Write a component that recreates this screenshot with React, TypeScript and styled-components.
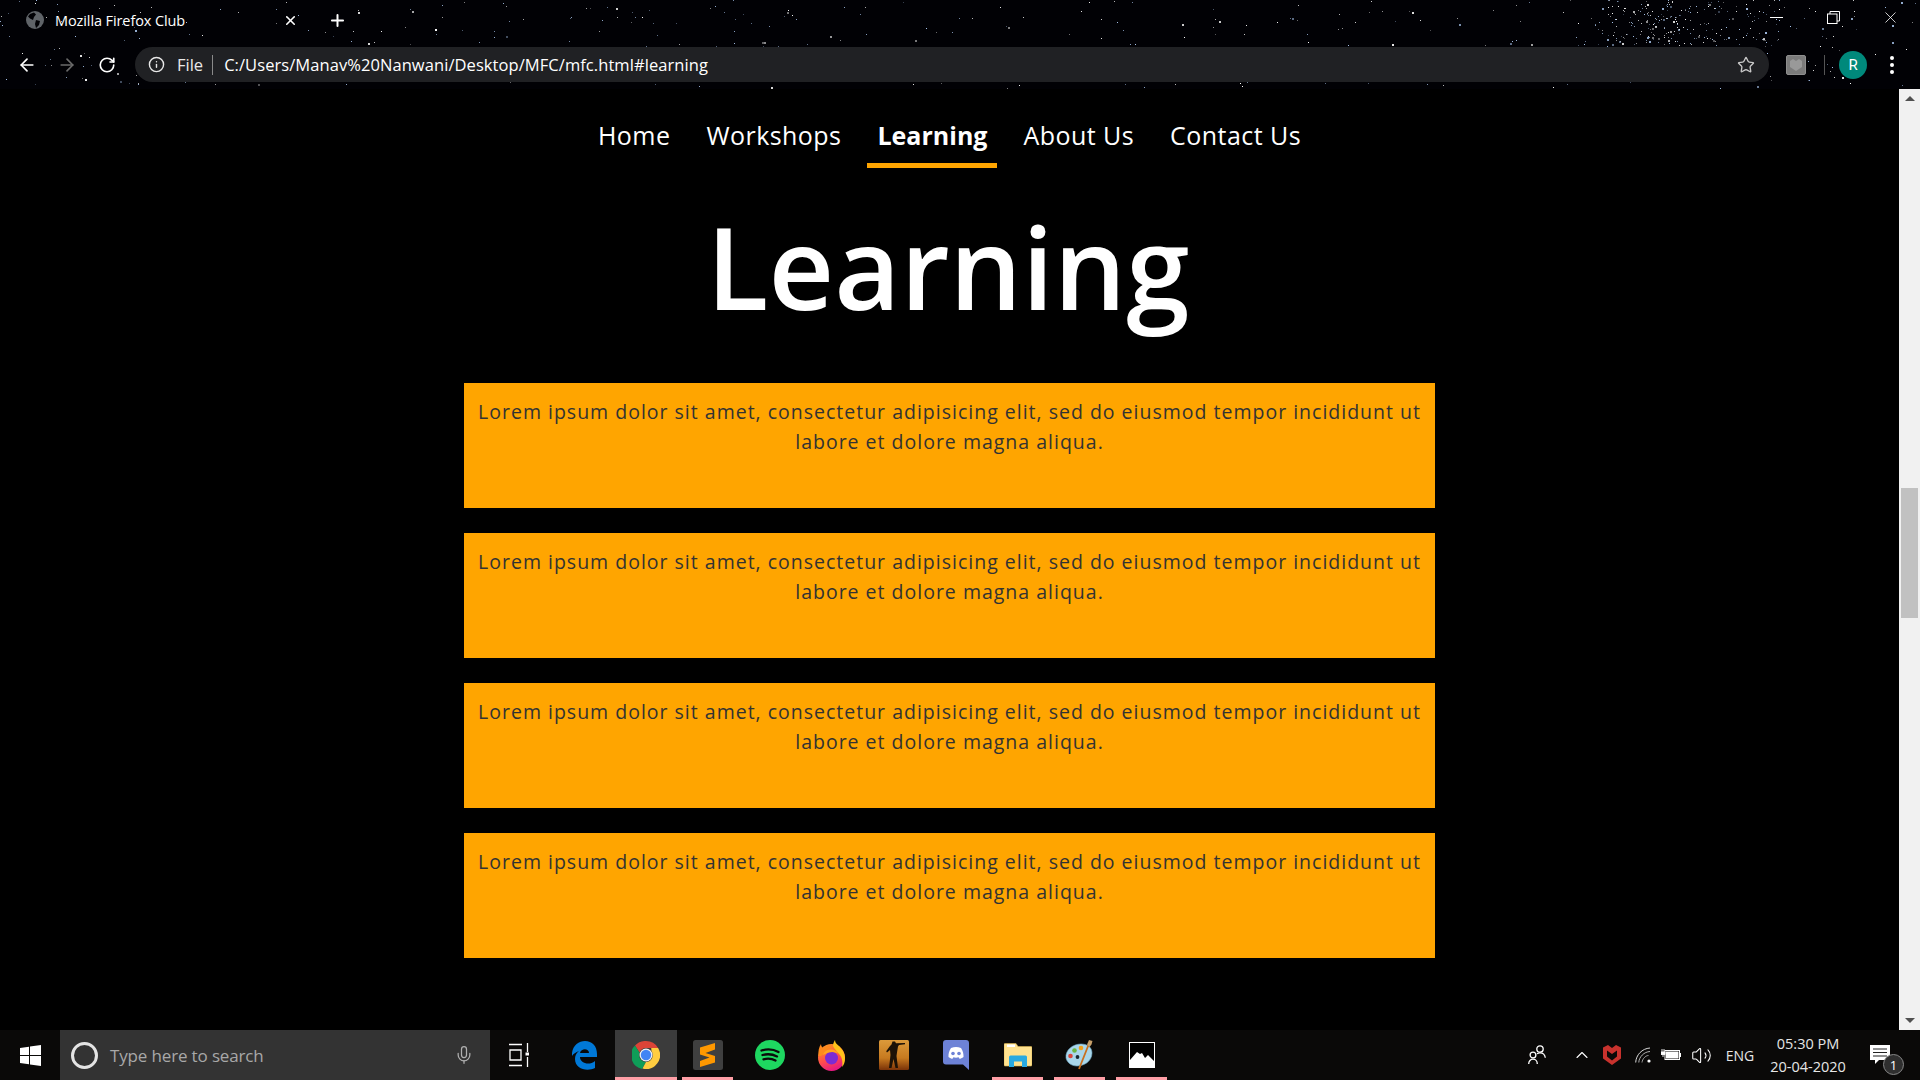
import React from 'react';
import styled, { createGlobalStyle } from 'styled-components';
import { ArrowLeft, ArrowRight, RotateCw, Info, Star, Mic, X, Plus, ChevronUp, Volume2 } from 'lucide-react';

const GlobalStyle = createGlobalStyle`
  html, body { margin: 0; padding: 0; background: #000; overflow: hidden; }
  * { box-sizing: border-box; }
  body { font-family: "Open Sans", "Noto Sans", sans-serif; }
`;

const Page = styled.div`
  width: 1920px;
  height: 1080px;
  display: flex;
  flex-direction: column;
  overflow: hidden;
  background: #000;
`;

// browser frame
const BrowserFrame = styled.header`
  position: relative;
  height: 89px;
  flex: none;
  background: #010105;
  overflow: hidden;
`;

const Stars = styled.svg`
  position: absolute;
  inset: 0;
`;

const TabRow = styled.div`
  position: relative;
  height: 47px;
  display: flex;
  align-items: flex-start;
  padding-left: 25px;
  padding-top: 10px;
  color: #fff;
`;

const GlobeIcon = styled.svg`
  flex: none;
  width: 20px;
  height: 20px;
`;

const TabTitle = styled.span`
  margin-left: 10px;
  width: 225px;
  font-size: 14.5px;
  line-height: 21px;
  white-space: nowrap;
  letter-spacing: -0.1px;
`;

const TabButton = styled.span<{ $w: number }>`
  flex: none;
  width: ${(p) => p.$w}px;
  height: 20px;
  display: flex;
  align-items: center;
  justify-content: center;
`;

const WindowControls = styled.div`
  margin-left: auto;
  display: flex;
  margin-top: -3px;
  margin-right: 1px;
`;

const WindowButton = styled.span`
  width: 57px;
  height: 20px;
  display: flex;
  align-items: center;
  justify-content: center;
`;

const MinimizeBar = styled.span`
  width: 13px;
  height: 1px;
  background: #fff;
`;

const Toolbar = styled.div`
  position: relative;
  height: 35px;
  display: flex;
  align-items: center;
  padding-left: 7px;
`;

const NavIcon = styled.span<{ $dim?: boolean }>`
  flex: none;
  width: 40px;
  height: 35px;
  display: flex;
  align-items: center;
  justify-content: center;
  color: ${(p) => (p.$dim ? '#6b6b6b' : '#fff')};
`;

const Omnibox = styled.div`
  flex: none;
  margin-left: 8px;
  width: 1634px;
  height: 35px;
  border-radius: 18px;
  background: #202124;
  display: flex;
  align-items: center;
  padding: 0 14px 0 13px;
  color: #e8e8e8;
  font-size: 16.5px;
`;

const FileLabel = styled.span`
  margin-left: 12px;
`;

const OmniDivider = styled.span`
  width: 1px;
  height: 20px;
  margin: 0 11px 0 9px;
  background: #8a8a8a;
`;

const UrlText = styled.span`
  flex: 1;
  color: #fff;
  white-space: nowrap;
  letter-spacing: 0.07px;
`;

const ExtensionBox = styled.span`
  flex: none;
  margin-left: 17px;
  width: 20px;
  height: 20px;
  border-radius: 2px;
  background: #7b7b7b;
  border: 1px solid #8e8e8e;
  display: flex;
  align-items: center;
  justify-content: center;
`;

const ToolbarDivider = styled.span`
  flex: none;
  width: 1px;
  height: 20px;
  margin-left: 18px;
  background: #555;
`;

const Avatar = styled.span`
  flex: none;
  width: 28px;
  height: 28px;
  margin-left: 14px;
  border-radius: 50%;
  background: #00897b;
  color: #fff;
  font-family: "Roboto", sans-serif;
  font-size: 15px;
  display: flex;
  align-items: center;
  justify-content: center;
`;

const MenuDots = styled.span`
  flex: none;
  margin-left: 23px;
  width: 4px;
  display: flex;
  flex-direction: column;
  gap: 3px;
  span {
    width: 4px;
    height: 4px;
    border-radius: 50%;
    background: #fff;
  }
`;

// page
const Viewport = styled.div`
  flex: 1;
  display: flex;
  min-height: 0;
`;

const Content = styled.main`
  flex: 1;
  display: flex;
  flex-direction: column;
  align-items: center;
  background: #000;
`;

const Nav = styled.nav`
  display: flex;
  gap: 16px;
  margin-top: 25px;
`;

const NavLink = styled.a<{ $active?: boolean }>`
  padding: 0 10px 6px;
  font-size: 25px;
  line-height: 43px;
  letter-spacing: ${(p) => (p.$active ? 0 : 0.45)}px;
  color: #fff;
  font-weight: ${(p) => (p.$active ? 700 : 400)};
  border-bottom: 5px solid ${(p) => (p.$active ? '#ffa500' : 'transparent')};
`;

const Title = styled.h1`
  margin: 18px 0 0;
  padding-right: 3px;
  font-size: 114px;
  line-height: 160px;
  font-weight: 600;
  color: #fff;
`;

const CardList = styled.div`
  margin-top: 37px;
  width: 971px;
  display: flex;
  flex-direction: column;
  gap: 25px;
`;

const Card = styled.p`
  margin: 0;
  height: 125px;
  padding: 14px 10px 0;
  background: #ffa500;
  color: #333;
  text-align: center;
  font-size: 19.5px;
  line-height: 30px;
  letter-spacing: 1px;
`;

const Scrollbar = styled.div`
  flex: none;
  width: 21px;
  background: #f1f1f1;
  display: flex;
  flex-direction: column;
  align-items: center;
  justify-content: space-between;
  position: relative;
`;

const ScrollArrow = styled.span<{ $down?: boolean }>`
  margin: 7px 0;
  width: 0;
  height: 0;
  border-left: 5px solid transparent;
  border-right: 5px solid transparent;
  ${(p) => (p.$down ? 'border-top: 5px solid #505050;' : 'border-bottom: 5px solid #505050;')}
`;

const ScrollThumb = styled.span`
  position: absolute;
  left: 2px;
  top: 399px;
  width: 17px;
  height: 130px;
  background: #c1c1c1;
`;

// taskbar
const Taskbar = styled.footer`
  height: 50px;
  flex: none;
  display: flex;
  align-items: stretch;
  background: #0a0908;
`;

const StartButton = styled.div`
  width: 60px;
  display: flex;
  align-items: center;
  justify-content: center;
`;

const SearchBox = styled.div`
  width: 430px;
  background: #333;
  display: flex;
  align-items: center;
  padding-left: 11px;
  color: #a8a8a8;
`;

const Cortana = styled.span`
  flex: none;
  width: 27px;
  height: 27px;
  border: 3px solid #e4e4e4;
  border-radius: 50%;
`;

const SearchText = styled.span`
  margin-left: 12px;
  flex: 1;
  font-size: 17px;
  letter-spacing: -0.15px;
`;

const MicWrap = styled.span`
  display: flex;
  margin-right: 16px;
  color: #b0b0b0;
`;

const TaskViewCell = styled.div`
  width: 58px;
  margin-right: 5px;
  display: flex;
  align-items: center;
  justify-content: center;
`;

const AppCell = styled.div<{ $active?: boolean; $open?: boolean }>`
  position: relative;
  width: 62px;
  display: flex;
  align-items: center;
  justify-content: center;
  background: ${(p) => (p.$active ? '#3b3b3b' : 'transparent')};
  ${(p) =>
    (p.$active || p.$open) &&
    `&::after {
      content: '';
      position: absolute;
      bottom: 0;
      height: 3px;
      background: #ff9fa6;
      left: ${p.$active ? 0 : 5}px;
      right: ${p.$active ? 0 : 6}px;
    }`}
`;

const Tray = styled.div`
  margin-left: auto;
  display: flex;
  align-items: center;
  padding-right: 15px;
  color: #fff;
`;

const TrayItem = styled.span<{ $w: number }>`
  flex: none;
  width: ${(p) => p.$w}px;
  height: 50px;
  display: flex;
  align-items: center;
  justify-content: center;
  position: relative;
`;

const TrayText = styled.span`
  font-size: 14px;
  color: #e6e6e6;
`;

const Clock = styled.span`
  display: flex;
  flex-direction: column;
  align-items: center;
  font-size: 14.5px;
  line-height: 23px;
  color: #e6e6e6;
`;

const NotifyBadge = styled.span`
  position: absolute;
  left: 28px;
  top: 24px;
  width: 21px;
  height: 21px;
  border-radius: 50%;
  border: 1px solid #888;
  background: #2f2f2f;
  color: #fff;
  font-size: 13px;
  display: flex;
  align-items: center;
  justify-content: center;
`;

// drawings
const makeStars = () => {
  let seed = 17;
  const rnd = () => {
    seed = (seed * 16807) % 2147483647;
    return seed / 2147483647;
  };
  const stars: { x: number; y: number; s: number; o: number; c: string }[] = [];
  const push = (x: number, y: number) => {
    const big = rnd() > 0.86;
    stars.push({
      x: Math.round(x),
      y: Math.round(y),
      s: big ? 2 : 1,
      o: 0.3 + rnd() * 0.7,
      c: rnd() > 0.5 ? '#ffffff' : '#a9c6ee',
    });
  };
  for (let i = 0; i < 480; i++) push(rnd() * 1920, rnd() * 88);
  for (let i = 0; i < 170; i++) push(1590 + rnd() * 190, rnd() * 46);
  for (let i = 0; i < 70; i++) push(1620 + rnd() * 90, rnd() * 46);
  return stars;
};
const starList = makeStars();

const Starfield = () => (
  <Stars width="1920" height="89">
    {starList.map((st, i) => (
      <rect key={i} x={st.x} y={st.y} width={st.s} height={st.s} fill={st.c} opacity={st.o} />
    ))}
  </Stars>
);

const Globe = () => (
  <GlobeIcon viewBox="0 0 20 20">
    <circle cx="10" cy="10" r="9" fill="#5f6368" />
    <path d="M5 4l4-1.500 2 2-2 2.500-1 3-3-1.500-2-2zM11 10l4 1-1 4-3 3-1-4z" fill="#010105" />
  </GlobeIcon>
);

const WindowsLogo = () => (
  <svg width="21" height="21" viewBox="0 0 21 21">
    <path d="M0 3l9-1.300V10H0zM10 1.500L21 0v10H10zM0 11h9v8.300L0 18zM10 11h11v10l-11-1.500z" fill="#fff" />
  </svg>
);

const TaskViewIcon = () => (
  <svg width="20" height="24" viewBox="0 0 20 24" fill="none" stroke="#fff" strokeWidth="1.300">
    <path d="M0 1.500h13M0 22.500h13M1 7h11v10H1z" />
    <path d="M18.500 0v9M18.500 14v10" />
    <rect x="16.500" y="9.500" width="3.500" height="3" fill="#fff" stroke="none" />
  </svg>
);

const EdgeIcon = () => (
  <svg width="26" height="30" viewBox="0 0 26 30">
    <path
      d="M1 13C2 5 8 1 14 1c7 0 12 5 12 13v3H9c0 6 9 9 15 4v7c-8 4-20 1-20-9 0-3 1-6 4-8-3 1-6 3-7 5zm8 0h9c0-5-8-5-9 0z"
      fill="#0078d7"
    />
  </svg>
);

const ChromeIcon = () => (
  <svg width="28" height="28" viewBox="0 0 28 28">
    <path d="M14 0a14 14 0 0 1 12.100 7H14a7 7 0 0 0-6.500 4.500L3 4.500A14 14 0 0 1 14 0z" fill="#db4437" />
    <path d="M3 4.500l4.500 7a7 7 0 0 0 6.500 9.500L10 28A14 14 0 0 1 3 4.500z" fill="#0f9d58" />
    <path d="M26.100 7A14 14 0 0 1 10.500 27.600L14 21a7 7 0 0 0 5.500-11l-.3-3z" fill="#ffcd40" />
    <circle cx="14" cy="14" r="6.500" fill="#f1f1f1" />
    <circle cx="14" cy="14" r="5.200" fill="#4285f4" />
  </svg>
);

const SublimeIcon = () => (
  <svg width="30" height="30" viewBox="0 0 30 30">
    <rect width="30" height="30" rx="2.500" fill="#3f3f3f" />
    <path d="M22 5v6.500L12.500 15 22 18v6.500L7 29v-.1V23l9.500-3.500L7 16.500V9.500z" transform="translate(0 -2)" fill="#ff9800" />
  </svg>
);

const SpotifyIcon = () => (
  <svg width="30" height="30" viewBox="0 0 30 30">
    <circle cx="15" cy="15" r="15" fill="#1ed760" />
    <path
      d="M6.500 10.500c6-1.700 12-1.200 17 1.500M7.500 15c5-1.300 10-.9 14.500 1.400M8.500 19.300c4.200-1 8.400-.7 12 1.200"
      fill="none"
      stroke="#0b0b0b"
      strokeWidth="2.300"
      strokeLinecap="round"
    />
  </svg>
);

const FirefoxIcon = () => (
  <svg width="30" height="32" viewBox="0 0 30 32">
    <defs>
      <linearGradient id="ffBody" x1="0.2" y1="0" x2="0.6" y2="1">
        <stop offset="0" stopColor="#ff9a1f" />
        <stop offset="0.55" stopColor="#ff4f4a" />
        <stop offset="1" stopColor="#e31587" />
      </linearGradient>
    </defs>
    <circle cx="14.500" cy="18.500" r="13.500" fill="url(#ffBody)" />
    <path d="M1.500 17C1 12 2 8 4 5c0 2 1 3.500 2.500 4 3-2.500 6-2 8.500-.5-3 .5-5.500 2-5 3.500l-6 5z" fill="#ff8a1c" />
    <circle cx="14.500" cy="19" r="6.500" fill="#7b2bd4" />
    <path d="M6 16c1-4 5-6 9-5.500 3 .5 5 2 6 4-3-1.500-6-2-9-1-2 .7-4.500 1.500-6 2.500z" fill="#ffa51f" />
    <path d="M18 1c0 3 2 4 4 6 3 3 6 7 6 12 0 4-1 7-3 9 1-5 0-10-3-13-2-3-5-5-6-8 0-3 1-4 2-6z" fill="#ffc21a" />
  </svg>
);

const CounterStrikeIcon = () => (
  <svg width="30" height="30" viewBox="0 0 30 30">
    <defs>
      <linearGradient id="csBg" x1="0" y1="0" x2="0" y2="1">
        <stop offset="0" stopColor="#dc9a3a" />
        <stop offset="0.6" stopColor="#c77a1f" />
        <stop offset="1" stopColor="#7a3208" />
      </linearGradient>
    </defs>
    <rect width="30" height="30" rx="1.500" fill="url(#csBg)" />
    <path
      d="M13.500 1.500h2.500l1 1.800 9-.3v1.300l-6 .7-1 1.500-1 6-.5 3.500 1.500 12h-2.500l-2-9-2 9H10l1.500-13-.5-5-3 2.500-.8-1.200L11 6l1.500-1.500z"
      fill="#1c1207"
    />
  </svg>
);

const DiscordIcon = () => (
  <svg width="26" height="30" viewBox="0 0 26 30">
    <path d="M3 0h20a3 3 0 0 1 3 3v27l-6-5.500H3a3 3 0 0 1-3-3V3a3 3 0 0 1 3-3z" fill="#6d82d6" />
    <path
      d="M8 8c3.500-1.300 6.500-1.300 10 0 2 3 2.700 6 2.500 9-1.500 1.200-3 1.700-4 1.800l-.9-1.500c-1.700.5-3.500.5-5.200 0l-.9 1.500c-1-.1-2.500-.6-4-1.800-.2-3 .5-6 2.500-9z"
      fill="#fff"
    />
    <circle cx="10" cy="13.500" r="1.800" fill="#6d82d6" />
    <circle cx="16" cy="13.500" r="1.800" fill="#6d82d6" />
  </svg>
);

const ExplorerIcon = () => (
  <svg width="28" height="24" viewBox="0 0 28 24">
    <path d="M0 1.500A1 1 0 0 1 1 .5h11l2 3h13a1 1 0 0 1 1 1V22a1 1 0 0 1-1 1H1a1 1 0 0 1-1-1z" fill="#ffe28f" stroke="#d9b24f" strokeWidth=".6" />
    <rect x="3" y="1.500" width="8" height="2.500" fill="#fff" />
    <path d="M5 24V14a1.500 1.500 0 0 1 1.500-1.500h15A1.500 1.500 0 0 1 23 14v10h-5v-5.500h-8V24z" fill="#29aae1" />
  </svg>
);

const PaintIcon = () => (
  <svg width="30" height="30" viewBox="0 0 30 30">
    <path d="M1 18C0 10 8 4 16 4c6 0 11 3 11 9 0 9-9 13-15 13-5 0-10-3-11-8z" fill="#a9d6ea" stroke="#6da8c4" strokeWidth=".6" />
    <circle cx="5.500" cy="16" r="2.300" fill="#d9453a" />
    <circle cx="9.500" cy="10.500" r="2.300" fill="#6cb543" />
    <circle cx="16" cy="8" r="2.300" fill="#f0a11f" />
    <circle cx="12.500" cy="17" r="1.900" fill="#1b2a33" />
    <path d="M23.500 5L14 29" stroke="#c9701f" strokeWidth="1.800" />
    <path d="M22 4.500L24 0l3.500 1-1 3.500-2 2.500z" fill="#c8a06a" />
  </svg>
);

const PhotosIcon = () => (
  <svg width="26" height="26" viewBox="0 0 26 26">
    <rect x="0.500" y="0.500" width="25" height="25" fill="#000" stroke="#fff" />
    <path d="M1 26V18l7-8 3 2 2-1 3 5 3-3 6 6v7z" fill="#fff" />
  </svg>
);

const PeopleIcon = () => (
  <svg width="18" height="20" viewBox="0 0 18 20" fill="none" stroke="#fff" strokeWidth="1.300">
    <circle cx="5" cy="10" r="2.900" />
    <path d="M.7 19c0-3 2-4.800 4.300-4.800S9.300 16 9.300 19" />
    <circle cx="12" cy="4" r="3.200" />
    <path d="M9 8.800c1-.7 2-1 3-1 3 0 5 2.300 5.300 5" />
  </svg>
);

const McAfeeIcon = () => (
  <svg width="18" height="20" viewBox="0 0 18 20">
    <path d="M0 2.500L5 0l4 3 4-3 5 2.500v11L9 20 0 13.500zM4 5.500v6l5 4 5-4v-6l-5 3.500z" fill="#c8322d" fillRule="evenodd" />
  </svg>
);

const WifiIcon = () => (
  <svg width="16" height="16" viewBox="0 0 16 16" fill="none" stroke="#d8d8d8" strokeWidth="1">
    <path d="M.7 15.500C1 8 7 1.500 15 1" />
    <path d="M3.800 15.500C4 10 9 4.800 15 4.500" opacity=".8" />
    <path d="M7 15.500C7.300 12 10.500 8.500 13.500 8.500" opacity=".7" />
    <circle cx="14" cy="14" r="1.600" fill="#fff" stroke="none" />
  </svg>
);

const BatteryIcon = () => (
  <svg width="20" height="14" viewBox="0 0 20 14">
    <path d="M1 1v3M3 1v3M0 4h4v2.500H0zM2 6.500V9" stroke="#fff" strokeWidth=".9" fill="#fff" />
    <rect x="4" y="2.500" width="14.500" height="9" fill="none" stroke="#fff" strokeWidth="1" />
    <rect x="5" y="3.500" width="12.500" height="7" fill="#fff" />
    <rect x="19" y="5" width="1" height="4" fill="#fff" />
  </svg>
);

export default function App() {
  const cards = [1, 2, 3, 4];
  return (
    <Page>
      <GlobalStyle />
      <BrowserFrame>
        <Starfield />
        <TabRow>
          <Globe />
          <TabTitle>Mozilla Firefox Club</TabTitle>
          <TabButton $w={20}><X size={15} strokeWidth={2.500} color="#fff" /></TabButton>
          <TabButton $w={74}><Plus size={19} strokeWidth={2.500} color="#fff" /></TabButton>
          <WindowControls>
            <WindowButton><MinimizeBar /></WindowButton>
            <WindowButton>
              <svg width="13" height="13" viewBox="0 0 13 13" fill="none" stroke="#fff">
                <rect x="0.500" y="3" width="9.500" height="9.500" />
                <path d="M3 3V.500h9.500V10H10" />
              </svg>
            </WindowButton>
            <WindowButton><X size={19} strokeWidth={1} color="#fff" /></WindowButton>
          </WindowControls>
        </TabRow>
        <Toolbar>
          <NavIcon><ArrowLeft size={20} strokeWidth={2} /></NavIcon>
          <NavIcon $dim><ArrowRight size={20} strokeWidth={2} /></NavIcon>
          <NavIcon><RotateCw size={18} strokeWidth={2.200} /></NavIcon>
          <Omnibox>
            <Info size={17} strokeWidth={2} color="#e8e8e8" />
            <FileLabel>File</FileLabel>
            <OmniDivider />
            <UrlText>C:/Users/Manav%20Nanwani/Desktop/MFC/mfc.html#learning</UrlText>
            <Star size={18} strokeWidth={1.800} color="#c8c8c8" />
          </Omnibox>
          <ExtensionBox>
            <svg width="12" height="12" viewBox="0 0 12 12">
              <path d="M0 2l3-2 3 2 3-2 3 2v6l-6 4-6-4z" fill="#999" />
            </svg>
          </ExtensionBox>
          <ToolbarDivider />
          <Avatar>R</Avatar>
          <MenuDots><span /><span /><span /></MenuDots>
        </Toolbar>
      </BrowserFrame>

      <Viewport>
        <Content>
          <Nav>
            <NavLink>Home</NavLink>
            <NavLink>Workshops</NavLink>
            <NavLink $active>Learning</NavLink>
            <NavLink>About Us</NavLink>
            <NavLink>Contact Us</NavLink>
          </Nav>
          <Title>Learning</Title>
          <CardList>
            {cards.map((c) => (
              <Card key={c}>
                Lorem ipsum dolor sit amet, consectetur adipisicing elit, sed do eiusmod tempor incididunt ut labore et dolore magna aliqua.
              </Card>
            ))}
          </CardList>
        </Content>
        <Scrollbar>
          <ScrollArrow />
          <ScrollThumb />
          <ScrollArrow $down />
        </Scrollbar>
      </Viewport>

      <Taskbar>
        <StartButton><WindowsLogo /></StartButton>
        <SearchBox>
          <Cortana />
          <SearchText>Type here to search</SearchText>
          <MicWrap><Mic size={20} strokeWidth={1.500} /></MicWrap>
        </SearchBox>
        <TaskViewCell><TaskViewIcon /></TaskViewCell>
        <AppCell><EdgeIcon /></AppCell>
        <AppCell $active><ChromeIcon /></AppCell>
        <AppCell $open><SublimeIcon /></AppCell>
        <AppCell><SpotifyIcon /></AppCell>
        <AppCell><FirefoxIcon /></AppCell>
        <AppCell><CounterStrikeIcon /></AppCell>
        <AppCell><DiscordIcon /></AppCell>
        <AppCell $open><ExplorerIcon /></AppCell>
        <AppCell $open><PaintIcon /></AppCell>
        <AppCell $open><PhotosIcon /></AppCell>
        <Tray>
          <TrayItem $w={60}><PeopleIcon /></TrayItem>
          <TrayItem $w={30}><ChevronUp size={20} strokeWidth={1.300} color="#fff" /></TrayItem>
          <TrayItem $w={30}><McAfeeIcon /></TrayItem>
          <TrayItem $w={32}><WifiIcon /></TrayItem>
          <TrayItem $w={24}><BatteryIcon /></TrayItem>
          <TrayItem $w={36}><Volume2 size={21} strokeWidth={1.200} color="#fff" /></TrayItem>
          <TrayItem $w={42}><TrayText>ENG</TrayText></TrayItem>
          <TrayItem $w={94}>
            <Clock><span>05:30 PM</span><span>20-04-2020</span></Clock>
          </TrayItem>
          <TrayItem $w={50}>
            <svg width="20" height="20" viewBox="0 0 20 20"><path d="M0 0h20v15H9l-4 4v-4H0z" fill="#fff" /><path d="M3 4h14M3 7.500h14M3 11h14" stroke="#222" strokeWidth="1" /></svg>
            <NotifyBadge>1</NotifyBadge>
          </TrayItem>
        </Tray>
      </Taskbar>
    </Page>
  );
}
